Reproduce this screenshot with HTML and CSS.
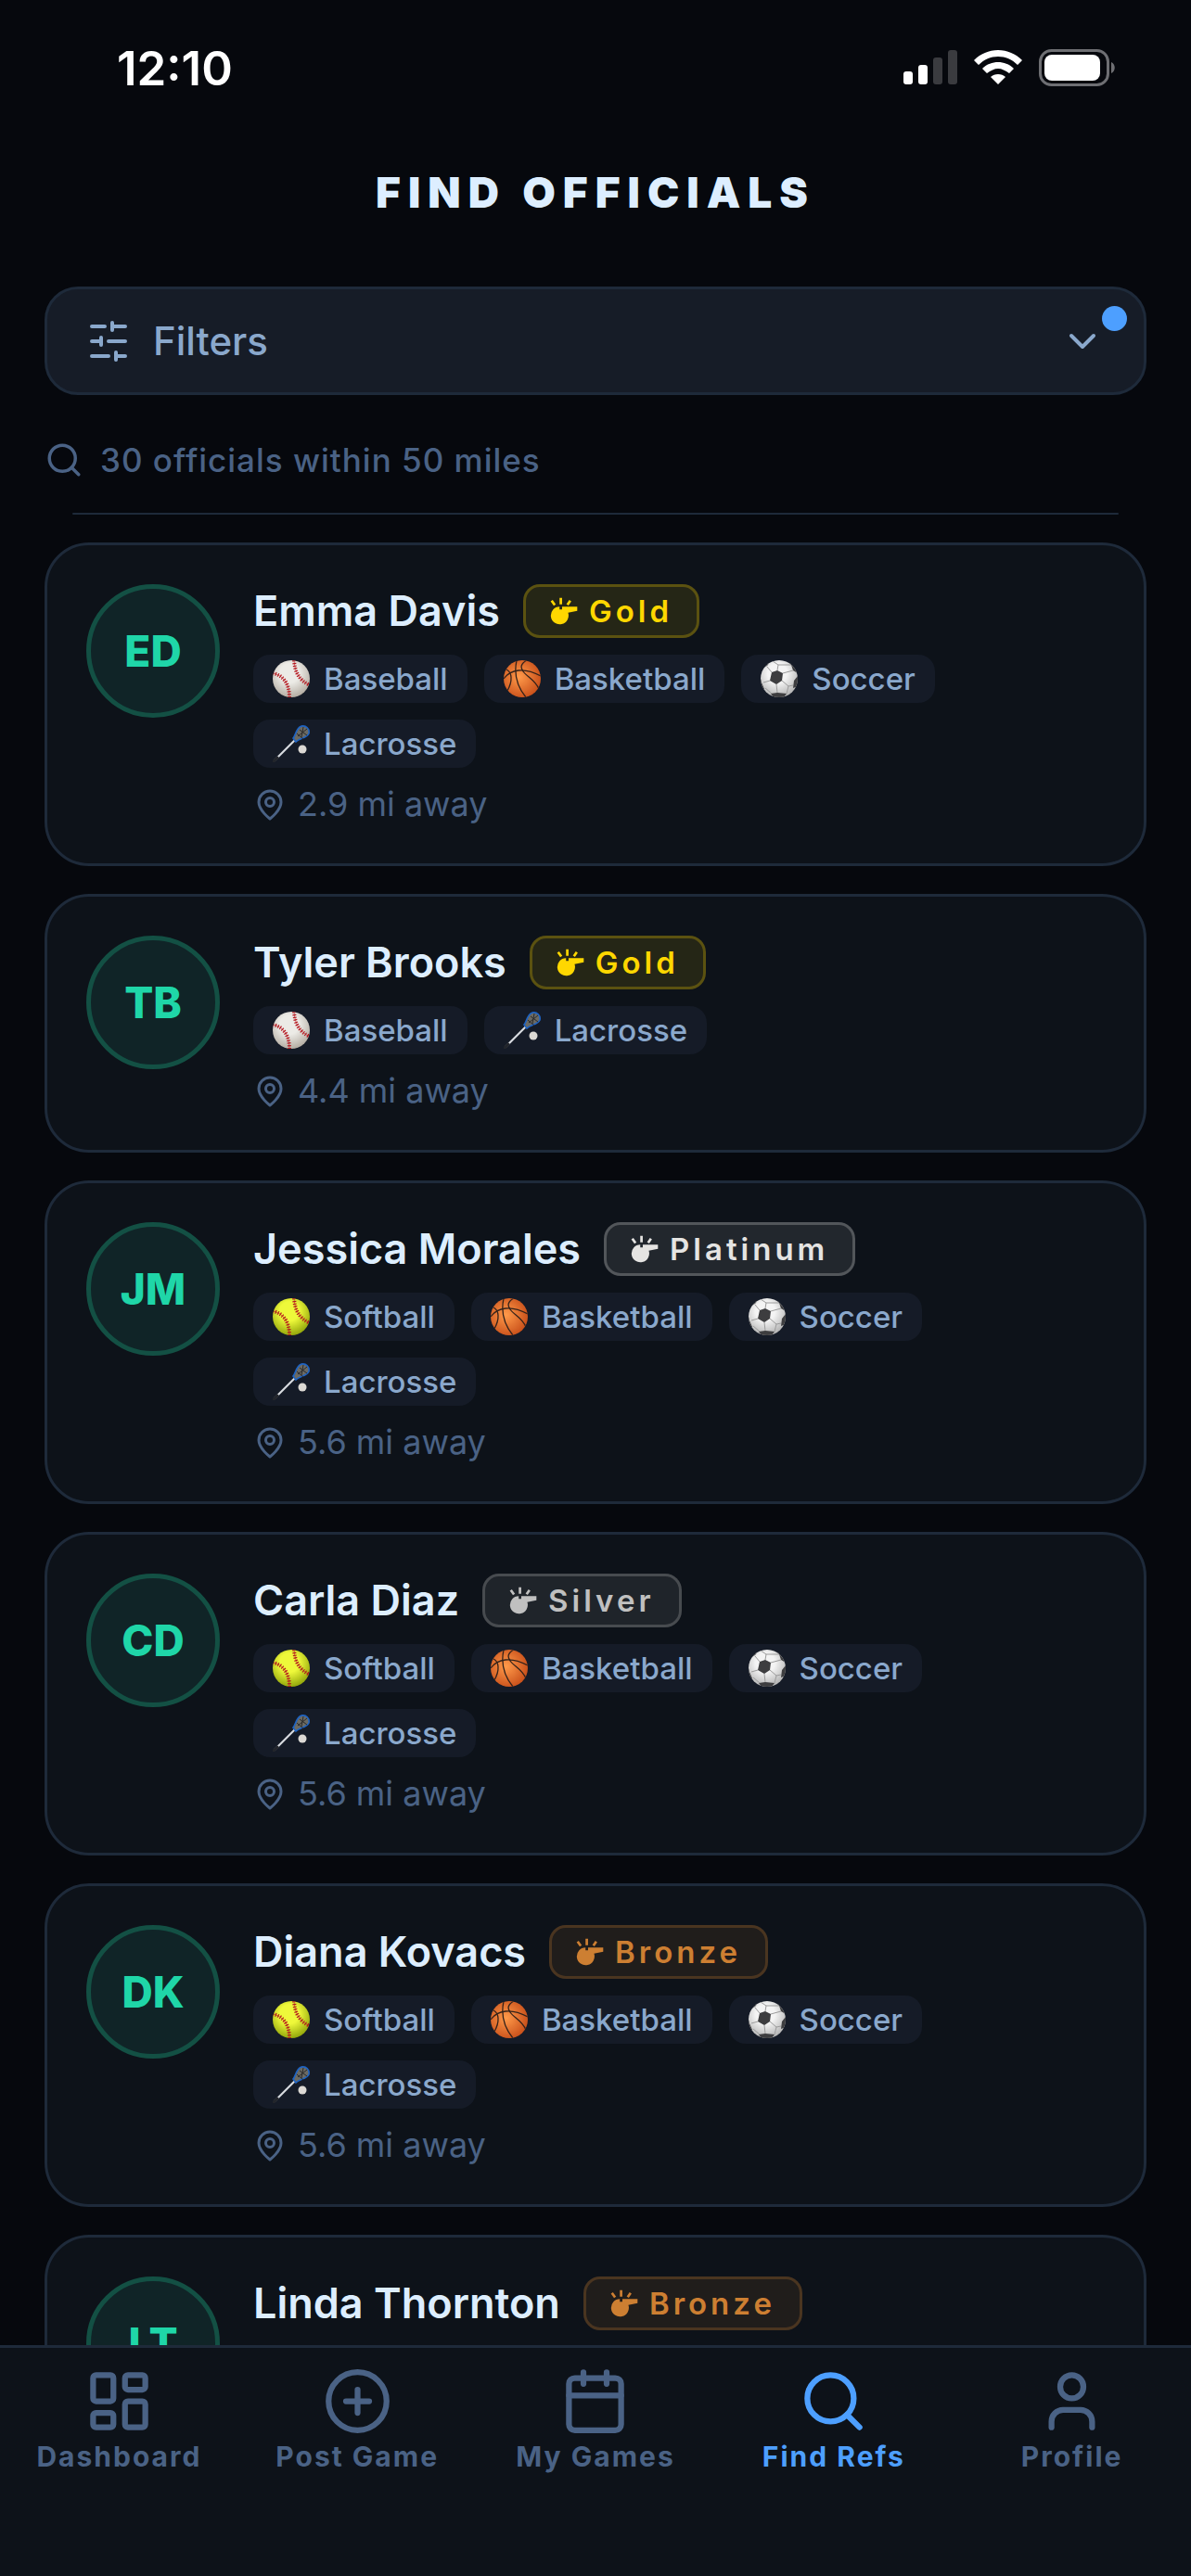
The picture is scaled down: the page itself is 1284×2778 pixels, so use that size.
FILE: index.html
```html
<!DOCTYPE html>
<html lang="en">
<head>
    <meta charset="UTF-8">
    <meta name="viewport" content="width=device-width, initial-scale=1.0">
    <title>Find Officials</title>
    <link rel="stylesheet" href="styles.css">
</head>

<body>
    <!-- Shared icons -->
    <svg class="sprite" aria-hidden="true">
        <defs>
            <radialGradient id="gradBaseball" cx="45%" cy="35%" r="65%">
                <stop offset="0.4" stop-color="#ecebe6"/>
                <stop offset="1" stop-color="#b5aea4"/>
            </radialGradient>
            <radialGradient id="gradSoftball" cx="45%" cy="35%" r="65%">
                <stop offset="0.4" stop-color="#eef83a"/>
                <stop offset="1" stop-color="#94a80c"/>
            </radialGradient>
            <radialGradient id="gradBasketball" cx="42%" cy="45%" r="60%">
                <stop offset="0" stop-color="#ff9a4a"/>
                <stop offset="1" stop-color="#c9501a"/>
            </radialGradient>
            <radialGradient id="gradSoccer" cx="45%" cy="35%" r="65%">
                <stop offset="0.4" stop-color="#f4f4f4"/>
                <stop offset="1" stop-color="#b4b4b4"/>
            </radialGradient>
            <clipPath id="ballClip"><circle cx="20" cy="20" r="20"/></clipPath>
        </defs>
        <symbol id="seams" viewBox="0 0 40 40">
            <g fill="none" stroke="#b5161f" clip-path="url(#ballClip)">
                <path d="M23 0C24 13 28 21 40 27M0 14C11 16 18 25 18 40" stroke-width="0.6"/>
                <path d="M23 0C24 13 28 21 40 27M0 14C11 16 18 25 18 40" stroke-width="4" stroke-dasharray="1.2 1.6"/>
            </g>
        </symbol>
        <symbol id="baseball" viewBox="0 0 40 40">
            <circle cx="20" cy="20" r="20" fill="url(#gradBaseball)"/>
            <use href="#seams"/>
        </symbol>
        <symbol id="softball" viewBox="0 0 40 40">
            <circle cx="20" cy="20" r="20" fill="url(#gradSoftball)"/>
            <use href="#seams"/>
        </symbol>
        <symbol id="basketball" viewBox="0 0 40 40">
            <circle cx="20" cy="20" r="20" fill="url(#gradBasketball)"/>
            <g fill="none" stroke="#33221a" stroke-width="1.3" clip-path="url(#ballClip)">
                <path d="M0 20C7 10 22 7 40 17"/>
                <path d="M14 0C11 14 14 28 24 40"/>
                <path d="M25 0C18 4 18 8 21 12C25 18 34 21 38 31"/>
                <path d="M3 10C9 13 10 22 4 33"/>
            </g>
        </symbol>
        <symbol id="soccer" viewBox="0 0 40 40">
            <circle cx="20" cy="20" r="20" fill="url(#gradSoccer)"/>
            <g clip-path="url(#ballClip)">
                <path d="M12 13L18 11L24 14L23 22L17 26L10 22ZM27 0L37 5L40 14L35 11L33 5ZM40 17L36 22L35 30L40 28ZM11 36L18 35L28 36L25 40H14ZM0 20L1 24L4 31L0 31ZM3 8L10 2L7 6Z" fill="#3d3d3f"/>
                <path d="M12 13L7 7M18 11L19 5L13 1M19 5L33 5M24 14L35 11M23 22L30 28L35 27M17 26L18 35M10 22L3 24M30 28L28 36M12 36L5 30" fill="none" stroke="#9b9b9b" stroke-width="1"/>
            </g>
        </symbol>
        <symbol id="lacrosse" viewBox="0 0 40 40">
            <path d="M2 38L24 16" stroke="#d9dce0" stroke-width="2.2" stroke-linecap="round"/>
            <path d="M1 39L5 35" stroke="#22252b" stroke-width="3" stroke-linecap="round"/>
            <path d="M22 14C25 11 25 3 31 1C36 0 40 4 39 9C37 14 29 14 25 18Z" fill="#6b6a63" stroke="#1d63c4" stroke-width="1.6"/>
            <path d="M27 12L37 4M26 9L33 15M29 5L37 11M31 13L33 2" stroke="#2a2a2b" stroke-width="1"/>
            <circle cx="32" cy="26" r="4.5" fill="#dcd9d4"/>
        </symbol>
        <symbol id="whistle" viewBox="0 0 88 88">
            <path d="M30 30V39H38V30H86V43L57 49A28 28 0 1 1 30 30Z" fill="currentColor"/>
            <path d="M34 2V23M5 11L15 25M64 11L55 24" stroke="currentColor" stroke-width="8"/>
        </symbol>
        <symbol id="pin" viewBox="0 0 24 24">
            <path d="M20 10c0 6-8 12-8 12s-8-6-8-12a8 8 0 0 1 16 0Z"/>
            <circle cx="12" cy="10" r="3"/>
        </symbol>
        <symbol id="search" viewBox="0 0 24 24">
            <circle cx="11" cy="11" r="8"/>
            <path d="m21 21-4.3-4.3"/>
        </symbol>
    </svg>

    <div class="app">
        <!-- Status bar -->
        <div class="status-bar">
            <span class="time">12:10</span>
            <div class="status-icons">
                <svg width="58" height="38" viewBox="0 0 58 38">
                    <rect x="0" y="23" width="10" height="14" rx="3" fill="#fff"/>
                    <rect x="16" y="16" width="10" height="21" rx="3" fill="#fff"/>
                    <rect x="32" y="8" width="10" height="29" rx="3" fill="#3a3b3f"/>
                    <rect x="48" y="0" width="10" height="37" rx="3" fill="#3a3b3f"/>
                </svg>
                <svg width="52" height="38" viewBox="0 0 52 38">
                    <path d="M26 0C36 0 45 4 52 11L47 16C41 10 34 7 26 7S11 10 5 16L0 11C7 4 16 0 26 0Z" fill="#fff"/>
                    <path d="M26 13C32 13 38 15 43 20L38 25C34 22 30 20 26 20S18 22 14 25L9 20C14 15 20 13 26 13Z" fill="#fff"/>
                    <path d="M26 26C29 26 32 27 34 29L26 37L18 29C20 27 23 26 26 26Z" fill="#fff"/>
                </svg>
                <svg width="82" height="40" viewBox="0 0 82 40">
                    <rect x="1.5" y="1.5" width="73" height="37" rx="12" fill="none" stroke="#6e6f73" stroke-width="3"/>
                    <rect x="6" y="6" width="60" height="28" rx="8" fill="#fff"/>
                    <path d="M78 14C83 16 83 24 78 26Z" fill="#6e6f73"/>
                </svg>
            </div>
        </div>

        <header class="header">
            <h1>FIND OFFICIALS</h1>
        </header>

        <main class="content">
            <button class="filters" type="button">
                <svg class="icon icon-md" viewBox="0 0 24 24">
                    <path d="M21 4h-7M10 4H3M21 12h-9M8 12H3M21 20h-5M12 20H3M14 2v4M8 10v4M16 18v4"/>
                </svg>
                <span>Filters</span>
                <svg class="icon icon-md chevron" viewBox="0 0 24 24"><path d="m6 9 6 6 6-6"/></svg>
                <span class="filter-dot"></span>
            </button>

            <p class="results">
                <svg class="icon icon-sm"><use href="#search"/></svg>
                30 officials within 50 miles
            </p>
            <hr class="divider">

            <div class="list">
                <article class="card">
                    <div class="avatar">ED</div>
                    <div class="info">
                        <div class="name-row">
                            <h2>Emma Davis</h2>
                            <span class="badge gold"><svg><use href="#whistle"/></svg>Gold</span>
                        </div>
                        <div class="sports">
                            <span class="sport"><svg><use href="#baseball"/></svg>Baseball</span>
                            <span class="sport"><svg><use href="#basketball"/></svg>Basketball</span>
                            <span class="sport"><svg><use href="#soccer"/></svg>Soccer</span>
                            <span class="sport"><svg><use href="#lacrosse"/></svg>Lacrosse</span>
                        </div>
                        <p class="distance"><svg class="icon icon-xs"><use href="#pin"/></svg>2.9 mi away</p>
                    </div>
                </article>

                <article class="card">
                    <div class="avatar">TB</div>
                    <div class="info">
                        <div class="name-row">
                            <h2>Tyler Brooks</h2>
                            <span class="badge gold"><svg><use href="#whistle"/></svg>Gold</span>
                        </div>
                        <div class="sports">
                            <span class="sport"><svg><use href="#baseball"/></svg>Baseball</span>
                            <span class="sport"><svg><use href="#lacrosse"/></svg>Lacrosse</span>
                        </div>
                        <p class="distance"><svg class="icon icon-xs"><use href="#pin"/></svg>4.4 mi away</p>
                    </div>
                </article>

                <article class="card">
                    <div class="avatar">JM</div>
                    <div class="info">
                        <div class="name-row">
                            <h2>Jessica Morales</h2>
                            <span class="badge platinum"><svg><use href="#whistle"/></svg>Platinum</span>
                        </div>
                        <div class="sports">
                            <span class="sport"><svg><use href="#softball"/></svg>Softball</span>
                            <span class="sport"><svg><use href="#basketball"/></svg>Basketball</span>
                            <span class="sport"><svg><use href="#soccer"/></svg>Soccer</span>
                            <span class="sport"><svg><use href="#lacrosse"/></svg>Lacrosse</span>
                        </div>
                        <p class="distance"><svg class="icon icon-xs"><use href="#pin"/></svg>5.6 mi away</p>
                    </div>
                </article>

                <article class="card">
                    <div class="avatar">CD</div>
                    <div class="info">
                        <div class="name-row">
                            <h2>Carla Diaz</h2>
                            <span class="badge silver"><svg><use href="#whistle"/></svg>Silver</span>
                        </div>
                        <div class="sports">
                            <span class="sport"><svg><use href="#softball"/></svg>Softball</span>
                            <span class="sport"><svg><use href="#basketball"/></svg>Basketball</span>
                            <span class="sport"><svg><use href="#soccer"/></svg>Soccer</span>
                            <span class="sport"><svg><use href="#lacrosse"/></svg>Lacrosse</span>
                        </div>
                        <p class="distance"><svg class="icon icon-xs"><use href="#pin"/></svg>5.6 mi away</p>
                    </div>
                </article>

                <article class="card">
                    <div class="avatar">DK</div>
                    <div class="info">
                        <div class="name-row">
                            <h2>Diana Kovacs</h2>
                            <span class="badge bronze"><svg><use href="#whistle"/></svg>Bronze</span>
                        </div>
                        <div class="sports">
                            <span class="sport"><svg><use href="#softball"/></svg>Softball</span>
                            <span class="sport"><svg><use href="#basketball"/></svg>Basketball</span>
                            <span class="sport"><svg><use href="#soccer"/></svg>Soccer</span>
                            <span class="sport"><svg><use href="#lacrosse"/></svg>Lacrosse</span>
                        </div>
                        <p class="distance"><svg class="icon icon-xs"><use href="#pin"/></svg>5.6 mi away</p>
                    </div>
                </article>

                <article class="card">
                    <div class="avatar">LT</div>
                    <div class="info">
                        <div class="name-row">
                            <h2>Linda Thornton</h2>
                            <span class="badge bronze"><svg><use href="#whistle"/></svg>Bronze</span>
                        </div>
                    </div>
                </article>
            </div>
        </main>

        <!-- Bottom tabs -->
        <nav class="tabs">
            <a href="#dashboard" class="tab">
                <svg class="icon icon-lg" viewBox="0 0 24 24">
                    <rect x="3" y="3" width="7" height="9" rx="1"/><rect x="14" y="3" width="7" height="5" rx="1"/>
                    <rect x="14" y="12" width="7" height="9" rx="1"/><rect x="3" y="16" width="7" height="5" rx="1"/>
                </svg>
                Dashboard
            </a>
            <a href="#post" class="tab">
                <svg class="icon icon-lg" viewBox="0 0 24 24"><circle cx="12" cy="12" r="10"/><path d="M8 12h8M12 8v8"/></svg>
                Post Game
            </a>
            <a href="#games" class="tab">
                <svg class="icon icon-lg" viewBox="0 0 24 24"><rect x="3" y="4" width="18" height="18" rx="2"/><path d="M8 2v4M16 2v4M3 10h18"/></svg>
                My Games
            </a>
            <a href="#refs" class="tab active">
                <svg class="icon icon-lg"><use href="#search"/></svg>
                Find Refs
            </a>
            <a href="#profile" class="tab">
                <svg class="icon icon-lg" viewBox="0 0 24 24"><path d="M19 21v-2a4 4 0 0 0-4-4H9a4 4 0 0 0-4 4v2"/><circle cx="12" cy="7" r="4"/></svg>
                Profile
            </a>
        </nav>
    </div>
</body>
</html>
```

FILE: styles.css
```css
* {
    box-sizing: border-box;
}

body {
    font-family: Inter, "Liberation Sans", sans-serif;
    background-color: #06080d;
    color: #ddeeff;
    margin: 0;
}

h1, h2, p {
    margin: 0;
}

.sprite {
    position: absolute;
    width: 0;
    height: 0;
}

.app {
    display: flex;
    flex-direction: column;
    height: 100vh;
}

/* Line icons */
.icon {
    flex-shrink: 0;
    fill: none;
    stroke: currentColor;
    stroke-width: 2;
    stroke-linecap: round;
    stroke-linejoin: round;
}

.icon-xs {
    width: 36px;
    height: 36px;
}

.icon-sm {
    width: 42px;
    height: 42px;
}

.icon-md {
    width: 48px;
    height: 48px;
}

.icon-lg {
    width: 75px;
    height: 75px;
}

/* Status bar */
.status-bar {
    display: flex;
    flex-shrink: 0;
    justify-content: space-between;
    align-items: center;
    height: 146px;
    padding: 0 82px 0 126px;
    color: #fff;
}

.time {
    font-size: 51px;
    font-weight: 600;
}

.status-icons {
    display: flex;
    align-items: center;
    gap: 18px;
}

/* Header */
.header {
    flex-shrink: 0;
    padding: 32px 48px 73px;
    text-align: center;
}

h1 {
    font-size: 46px;
    line-height: 58px;
    font-weight: 900;
    letter-spacing: 8px;
}

.content {
    flex: 1;
    min-height: 0;
    overflow: hidden;
    padding: 0 48px;
}

/* Filters */
.filters {
    position: relative;
    display: flex;
    align-items: center;
    gap: 24px;
    width: 100%;
    height: 117px;
    padding: 0 42px;
    background-color: #161c27;
    border: 3px solid #1e2a3a;
    border-radius: 36px;
    color: #8aa8cc;
    font-family: inherit;
    font-size: 42px;
    font-weight: 500;
    cursor: pointer;
}

.chevron {
    margin-left: auto;
}

.filter-dot {
    position: absolute;
    top: 18px;
    right: 18px;
    width: 27px;
    height: 27px;
    border-radius: 50%;
    background-color: #4d9fff;
}

.results {
    display: flex;
    align-items: center;
    gap: 18px;
    padding: 43px 0 30px;
    color: #4a6285;
    font-size: 35px;
    line-height: 54px;
    font-weight: 500;
    letter-spacing: 1px;
}

.divider {
    height: 2px;
    margin: 0 30px 30px;
    border: none;
    border-radius: 2px;
    background-color: #1e2a3a;
}

/* Official cards */
.list {
    display: flex;
    flex-direction: column;
    gap: 30px;
}

.card {
    display: flex;
    align-items: flex-start;
    gap: 36px;
    padding: 42px;
    background-color: #0d1219;
    border: 3px solid #1e2a3a;
    border-radius: 48px;
}

.avatar {
    display: flex;
    flex-shrink: 0;
    align-items: center;
    justify-content: center;
    width: 144px;
    height: 144px;
    background-color: #102427;
    border: 5px solid #135044;
    border-radius: 50%;
    color: #1fd6a8;
    font-size: 46px;
    font-weight: 800;
}

.info {
    display: flex;
    flex: 1;
    flex-direction: column;
    gap: 18px;
}

.name-row {
    display: flex;
    align-items: center;
    gap: 25px;
}

h2 {
    font-size: 45px;
    line-height: 58px;
    font-weight: 600;
}

.badge {
    display: flex;
    align-items: center;
    gap: 12px;
    height: 58px;
    padding: 0 26px;
    border: 3px solid;
    border-radius: 18px;
    font-size: 33px;
    font-weight: 600;
    letter-spacing: 4px;
}

.badge svg {
    width: 30px;
    height: 30px;
}

.gold {
    color: #ffd700;
    background-color: rgba(255, 215, 0, 0.1);
    border-color: rgba(255, 215, 0, 0.25);
}

.platinum {
    color: #e5e4e2;
    background-color: rgba(229, 228, 226, 0.1);
    border-color: rgba(229, 228, 226, 0.25);
}

.silver {
    color: #c0c0c0;
    background-color: rgba(192, 192, 192, 0.1);
    border-color: rgba(192, 192, 192, 0.25);
}

.bronze {
    color: #cd7f32;
    background-color: rgba(205, 127, 50, 0.1);
    border-color: rgba(205, 127, 50, 0.25);
}

.sports {
    display: flex;
    flex-wrap: wrap;
    gap: 18px;
    max-width: 800px;
}

.sport {
    display: flex;
    align-items: center;
    gap: 15px;
    height: 52px;
    padding: 0 21px;
    background-color: #151b27;
    border-radius: 18px;
    color: #8aa8cc;
    font-size: 33px;
    font-weight: 500;
}

.sport svg {
    width: 40px;
    height: 40px;
}

.distance {
    display: flex;
    align-items: center;
    gap: 12px;
    color: #4a6285;
    font-size: 36px;
    line-height: 43px;
}

/* Bottom tabs */
.tabs {
    display: flex;
    flex-shrink: 0;
    height: 249px;
    padding-top: 20px;
    background-color: #0d1219;
    border-top: 3px solid #1e2a3a;
}

.tab {
    display: flex;
    flex: 1;
    flex-direction: column;
    align-items: center;
    gap: 4px;
    color: #4a6285;
    font-size: 30px;
    line-height: 36px;
    font-weight: 700;
    letter-spacing: 2px;
    text-decoration: none;
}

.tab.active {
    color: #4d9fff;
}
```
